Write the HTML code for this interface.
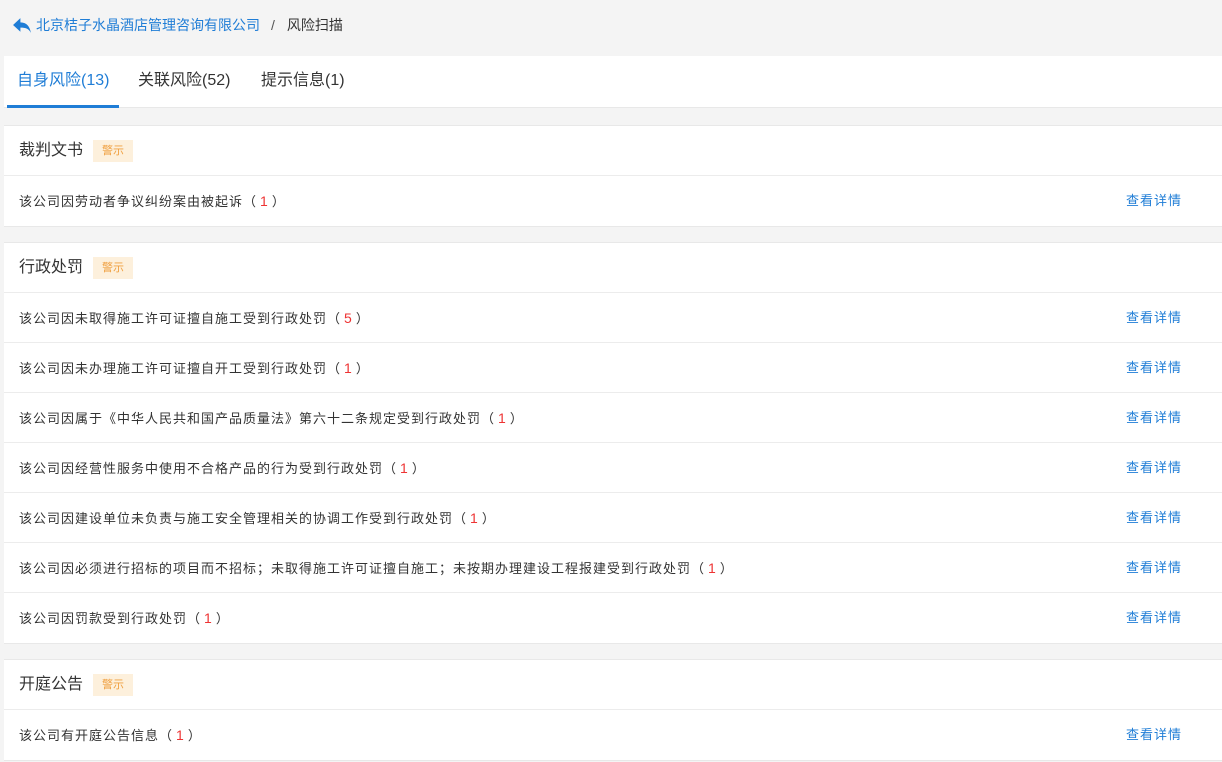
<!DOCTYPE html>
<html><head><meta charset="utf-8"><style>
*{margin:0;padding:0;box-sizing:border-box}
body{width:1222px;height:762px;overflow:hidden;background:#f4f4f4;font-family:"Liberation Sans","Noto Sans CJK SC",sans-serif;color:#333}
.bc{position:absolute;left:12px;top:16px;font-size:14px;height:18px;line-height:18px;display:flex;align-items:center}
.bc a{color:#1f7dd6}
.bc .sep{margin:0 12px 0 11px;color:#555}
.tabs{position:absolute;left:4px;top:56px;width:1218px;height:52px;background:#fff;border-bottom:1px solid #e8e8e8}
.tab{position:absolute;top:0;height:52px;line-height:50px;font-size:16px;color:#333}
.tab.on{color:#1f7dd6;border-bottom:3px solid #1f7dd6}
.card{position:absolute;left:4px;width:1218px;background:#fff;border-top:1px solid #e8e8e8;border-bottom:1px solid #e8e8e8}
.hd{height:50px;line-height:50px;padding-left:15px;font-size:16px;border-bottom:1px solid #ececec;display:flex;align-items:center}
.tag{display:inline-block;margin-left:10px;background:#fdf0dc;color:#f0a040;font-size:11px;height:22px;line-height:22px;padding:0 9px}
.row{height:50px;line-height:50px;padding-left:15px;font-size:13px;letter-spacing:1px;border-bottom:1px solid #ececec;position:relative}
.row:last-child{border-bottom:none}
.row b{font-weight:normal;color:#e33;font-size:14px;margin:0 3px}
.row a{position:absolute;left:1122px;top:0;color:#1f7dd6}
</style></head><body>
<div class="bc"><svg width="21" height="17" viewBox="0 0 20 16"><path d="M8 1 L1 7.5 L8 14 L8 10 C13 10 16 11 18 15 C17 9 14 5 8 5 Z" fill="#1f7dd6"/></svg><a style="margin-left:3px">北京桔子水晶酒店管理咨询有限公司</a><span class="sep">/</span><span>风险扫描</span></div>
<div class="tabs">
<div class="tab on" style="left:3px;width:112px;padding-left:10px">自身风险(13)</div>
<div class="tab" style="left:134px">关联风险(52)</div>
<div class="tab" style="left:257px">提示信息(1)</div>
</div>
<div class="card" style="top:125px">
<div class="hd">裁判文书<span class="tag">警示</span></div>
<div class="row">该公司因劳动者争议纠纷案由被起诉（<b>1</b>）<a>查看详情</a></div>
</div>
<div class="card" style="top:242px">
<div class="hd">行政处罚<span class="tag">警示</span></div>
<div class="row">该公司因未取得施工许可证擅自施工受到行政处罚（<b>5</b>）<a>查看详情</a></div>
<div class="row">该公司因未办理施工许可证擅自开工受到行政处罚（<b>1</b>）<a>查看详情</a></div>
<div class="row">该公司因属于《中华人民共和国产品质量法》第六十二条规定受到行政处罚（<b>1</b>）<a>查看详情</a></div>
<div class="row">该公司因经营性服务中使用不合格产品的行为受到行政处罚（<b>1</b>）<a>查看详情</a></div>
<div class="row">该公司因建设单位未负责与施工安全管理相关的协调工作受到行政处罚（<b>1</b>）<a>查看详情</a></div>
<div class="row">该公司因必须进行招标的项目而不招标；未取得施工许可证擅自施工；未按期办理建设工程报建受到行政处罚（<b>1</b>）<a>查看详情</a></div>
<div class="row">该公司因罚款受到行政处罚（<b>1</b>）<a>查看详情</a></div>
</div>
<div class="card" style="top:659px">
<div class="hd">开庭公告<span class="tag">警示</span></div>
<div class="row">该公司有开庭公告信息（<b>1</b>）<a>查看详情</a></div>
</div>
</body></html>
